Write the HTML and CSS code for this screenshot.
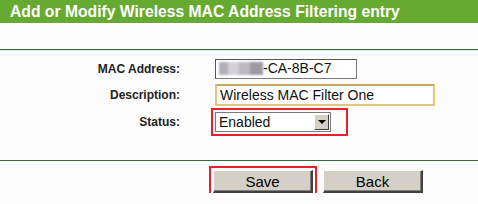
FILE: index.html
```html
<!DOCTYPE html>
<html lang="en">
<head>
<meta charset="UTF-8" />
<title>Wireless MAC Filtering</title>
<link rel="stylesheet" href="styles.css">
</head>
<body>

<div class="title-bar">Add or Modify Wireless MAC Address Filtering entry</div>

<div class="form-area">
<div class="form-grid">
<label class="lbl">MAC Address:</label>
<div class="field mac-field"><span class="blurred"></span>-CA-8B-C7</div>

<label class="lbl">Description:</label>
<div class="field desc-field">Wireless MAC Filter One</div>

<label class="lbl">Status:</label>
<div class="select-wrap marked">
<div class="fake-select">Enabled</div>
<span class="select-arrow"></span>
</div>
</div>
</div>

<div class="button-row">
<button class="btn marked-btn">Save</button>
<button class="btn">Back</button>
</div>

</body>
</html>
```

FILE: styles.css
```css
* { box-sizing: border-box; }

html, body {
margin: 0; padding: 0;
background: #fcfcfc;
font-family: Arial, "Liberation Sans", sans-serif;
}

.title-bar {
height: 23px; line-height: 23px;
background: #67aa31; color: #fff;
font-size: 15.7px; font-weight: bold;
padding-left: 10px;
white-space: nowrap;
}

.form-area {
margin-top: 26px;
border-top: 1px solid #2e6a3c;
box-shadow: inset 0 1px 0 #dff0e2;
border-bottom: 1px solid #2e6a3c;
padding: 9px 0 28px;
}

.form-grid {
display: grid;
grid-template-columns: 180px auto;
column-gap: 35px;
row-gap: 5px;
align-items: center;
}

.lbl {
text-align: right;
font-size: 12px; font-weight: bold;
color: #222;
}

.field {
height: 20px; line-height: 17px;
font-size: 14px; color: #111;
padding-left: 3px;
white-space: nowrap;
background: #fff;
}

.mac-field {
width: 142px;
border: 1px solid #7a7a7a;
border-top-color: #555; border-left-color: #555;
}

.blurred {
display: inline-block; vertical-align: -2px;
width: 44px; height: 13px;
background: linear-gradient(90deg, #b5b0b8 0 20%, #d3cfd6 20% 45%, #bdb8c1 45% 70%, #9e9aa2 70% 100%);
filter: blur(0.8px);
}

.desc-field {
width: 220px; height: 22px; line-height: 19px;
border: 2px solid #e3c57c;
border-top-color: #c9a75c;
}

.select-wrap {
position: relative;
width: 116px; height: 20px;
margin-top: 1px;
}

.fake-select {
height: 20px; line-height: 18px;
border: 1px solid #7a7a7a;
background: #fff;
font-size: 14px; color: #111;
padding-left: 3px;
}

.select-arrow {
position: absolute;
top: 2px; right: 2px;
width: 15px; height: 16px;
background: #d4d0c8;
border: 1px solid #fff;
border-right-color: #404040; border-bottom-color: #404040;
}

.select-arrow::after {
content: "";
position: absolute; left: 3px; top: 5px;
border-left: 4px solid transparent;
border-right: 4px solid transparent;
border-top: 4px solid #000;
}

.marked::before {
content: "";
position: absolute;
left: -4px; right: -17px; top: -4px; bottom: -4px;
border: 2px solid #e8202a;
}

.button-row {
display: flex; gap: 10px;
padding: 9px 0 0 213px;
}

.btn {
width: 100px; height: 23px;
background: #d4d0c8;
font-family: Arial, "Liberation Sans", sans-serif;
font-size: 15px; color: #000;
border: 1px solid #fff;
border-right: 2px solid #404040; border-bottom: 2px solid #404040;
box-shadow: inset -1px -1px 0 #808080;
padding: 0;
}

.marked-btn {
outline: 2px solid #e8202a;
outline-offset: 2px;
}
```
